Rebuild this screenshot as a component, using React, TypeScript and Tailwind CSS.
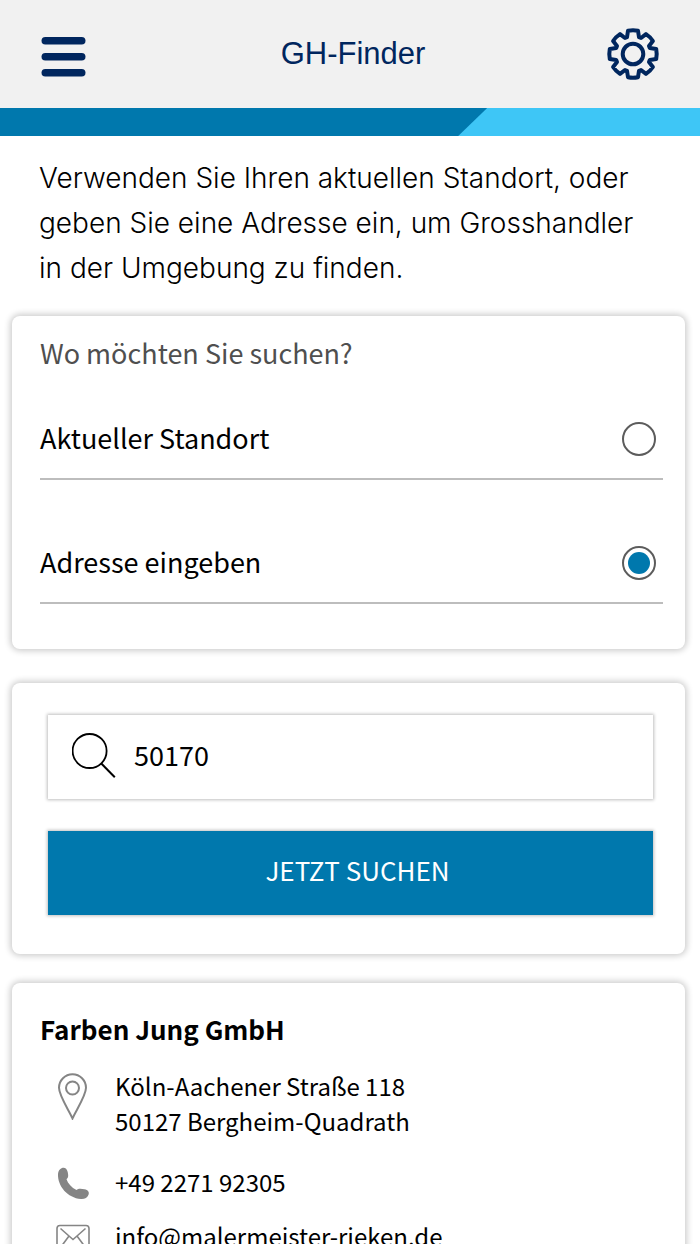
import { useState, type ReactNode } from "react";

type Mode = "current" | "address";

const OPTIONS: { id: Mode; label: string }[] = [
  { id: "current", label: "Aktueller Standort" },
  { id: "address", label: "Adresse eingeben" },
];

export default function App() {
  const [mode, setMode] = useState<Mode>("address");
  const [query, setQuery] = useState("50170");

  return (
    <div className="min-h-screen bg-white text-black font-['Noto_Sans_CJK_JP','Noto_Sans',sans-serif]">
      <header>
        <div className="h-[108px] px-10 grid grid-cols-[1fr_auto_1fr] items-center bg-[#f1f1f1] text-[#00265e]">
          <button aria-label="Menü" className="justify-self-start">
            <MenuIcon />
          </button>
          <h1 className="pl-1.5 text-[31px] leading-10 font-['Liberation_Sans',sans-serif]">GH-Finder</h1>
          <button aria-label="Einstellungen" className="justify-self-end">
            <GearIcon />
          </button>
        </div>
        <div className="h-7 bg-[#3ec6f6]">
          <div className="h-full w-[69.6%] bg-[#0078ad] [clip-path:polygon(0_0,100%_0,calc(100%-29px)_100%,0_100%)]" />
        </div>
      </header>

      <main className="pl-3 pr-[15px] pb-8">
        <p className="pl-[27px] pr-8 pt-5 pb-[25px] text-[28px] leading-[45px] font-light font-['Inter',sans-serif]">
          Verwenden Sie Ihren aktuellen Standort, oder geben Sie eine Adresse ein, um Grosshandler in der Umgebung zu
          finden.
        </p>

        <Card>
          <fieldset className="pl-7 pr-[22px] pt-4 pb-[45px]">
            <legend className="float-left text-[27px] leading-[42px] text-[#4f4f4f]">Wo möchten Sie suchen?</legend>
            <div className="clear-both pt-[26px] flex flex-col gap-11">
              {OPTIONS.map((o) => (
                <label
                  key={o.id}
                  className="h-20 flex items-center justify-between pr-[7px] border-b-2 border-[#bdbdbd] text-[27px] leading-10"
                >
                  <span className="pb-0.5">{o.label}</span>
                  <input
                    type="radio"
                    name="mode"
                    checked={mode === o.id}
                    onChange={() => setMode(o.id)}
                    className="appearance-none size-[34px] rounded-full border-2 border-[#5c5c5c] grid place-items-center before:size-[22px] before:rounded-full checked:before:bg-[#0078ad]"
                  />
                </label>
              ))}
            </div>
          </fieldset>
        </Card>

        <Card className="mt-[34px]">
          <form
            onSubmit={(e) => e.preventDefault()}
            className="pl-9 pr-8 pt-8 pb-[39px] flex flex-col gap-8 leading-10"
          >
            <label className="h-[84px] pl-6 pb-1 flex items-center gap-4 shadow-[0_0_3px_1px_rgba(0,0,0,0.25)]">
              <SearchIcon />
              <input
                aria-label="Adresse"
                value={query}
                onChange={(e) => setQuery(e.target.value)}
                className="flex-1 min-w-0 text-[27px] outline-none"
              />
            </label>
            <button
              type="submit"
              className="h-[84px] pl-3.5 pb-1.5 bg-[#0078ad] text-[26px] text-white shadow-[0_0_3px_1px_rgba(0,0,0,0.25)]"
            >
              JETZT SUCHEN
            </button>
          </form>
        </Card>

        <Card className="mt-[29px]">
          <article className="px-7 pt-[26px] pb-8">
            <h2 className="text-[26px] leading-10 font-bold">Farben Jung GmbH</h2>
            <address className="pt-[19px] flex flex-col gap-[18px] not-italic text-[24px] leading-[35px]">
              <Row icon={<PinIcon />}>
                <p className="pb-2">
                  Köln-Aachener Straße 118
                  <br />
                  50127 Bergheim-Quadrath
                </p>
              </Row>
              <Row icon={<PhoneIcon />}>
                <a href="tel:+49227192305">+49 2271 92305</a>
              </Row>
              <Row icon={<MailIcon />}>
                <a href="mailto:info@malermeister-rieken.de">info@malermeister-rieken.de</a>
              </Row>
            </address>
          </article>
        </Card>
      </main>
    </div>
  );
}

function Card({ className = "", children }: { className?: string; children: ReactNode }) {
  return (
    <section className={`rounded-lg bg-white shadow-[0_0_6px_2px_rgba(0,0,0,0.2)] ${className}`}>{children}</section>
  );
}

function Row({ icon, children }: { icon: ReactNode; children: ReactNode }) {
  return (
    <div className="flex items-start">
      <span className="w-[75px] pl-4 pt-0.5 shrink-0 text-[#858585]">{icon}</span>
      <div>{children}</div>
    </div>
  );
}

function MenuIcon() {
  return (
    <svg width="48" height="40" viewBox="0 0 48 40" className="mt-1.5" fill="currentColor">
      <rect x="1.500" y="0" width="44" height="7.600" rx="3.800" />
      <rect x="1.500" y="16" width="44" height="7.600" rx="3.800" />
      <rect x="1.500" y="32" width="44" height="7.600" rx="3.800" />
    </svg>
  );
}

function GearIcon() {
  return (
    <svg
      width="54"
      height="54"
      viewBox="-27 -27 54 54"
      fill="none"
      stroke="currentColor"
      strokeWidth="4"
      strokeLinejoin="round"
    >
      <path d="M-5-23.2Q0-24.2 5-23.2L6-16.8 8-16 13-19.9Q17.2-17.2 19.9-13L16-8 16.8-6 23.2-5Q24.2 0 23.2 5L16.8 6 16 8 19.9 13Q17.2 17.2 13 19.9L8 16 6 16.8 5 23.2Q0 24.2-5 23.2L-6 16.8-8 16-13 19.9Q-17.2 17.2-19.9 13L-16 8-16.8 6-23.2 5Q-24.2 0-23.2-5L-16.8-6-16-8-19.9-13Q-17.2-17.2-13-19.9L-8-16-6-16.8Z" />
      <circle r="10.3" />
    </svg>
  );
}

function SearchIcon() {
  return (
    <svg width="46" height="46" viewBox="0 0 46 46" fill="none" stroke="#000" strokeWidth="1.8">
      <circle cx="17.6" cy="19" r="17" />
      <path d="M29.300 31.500 42.800 45.300" strokeWidth="2" />
    </svg>
  );
}

function PinIcon() {
  return (
    <svg width="34" height="50" viewBox="0 0 34 50" fill="none" stroke="currentColor" strokeWidth="2">
      <path d="M16.5 48.500C14 42 3 26 3 17.800A13.500 13.500 0 0 1 30 17.800C30 26 19 42 16.500 48.500Z" />
      <circle cx="16.5" cy="18" r="6.5" />
    </svg>
  );
}

function PhoneIcon() {
  return (
    <svg width="34" height="34" viewBox="0 0 34 34" fill="currentColor">
      <path d="M6 2C8.500 1 11 2.500 11.700 6C12.500 10 12.500 11.500 10.500 13.200C12 17.500 15.500 21.500 20.500 24C22 22.500 24.500 22.300 28.500 23.200C32 24 33.500 26 32.600 28.500C31.500 32 28.500 33.200 25 33C11.500 32 1.500 20 2 8C2.200 5 3.500 3 6 2Z" />
    </svg>
  );
}

function MailIcon() {
  return (
    <svg width="34" height="28" viewBox="0 0 34 28" className="mt-1" fill="none" stroke="currentColor" strokeWidth="1.6">
      <rect x="1" y="1.500" width="32" height="25" rx="3" />
      <path d="M4.500 4.500 17 15.500 29.500 4.500M13 12 4.500 23.500M21 12 29.500 23.500" />
    </svg>
  );
}
